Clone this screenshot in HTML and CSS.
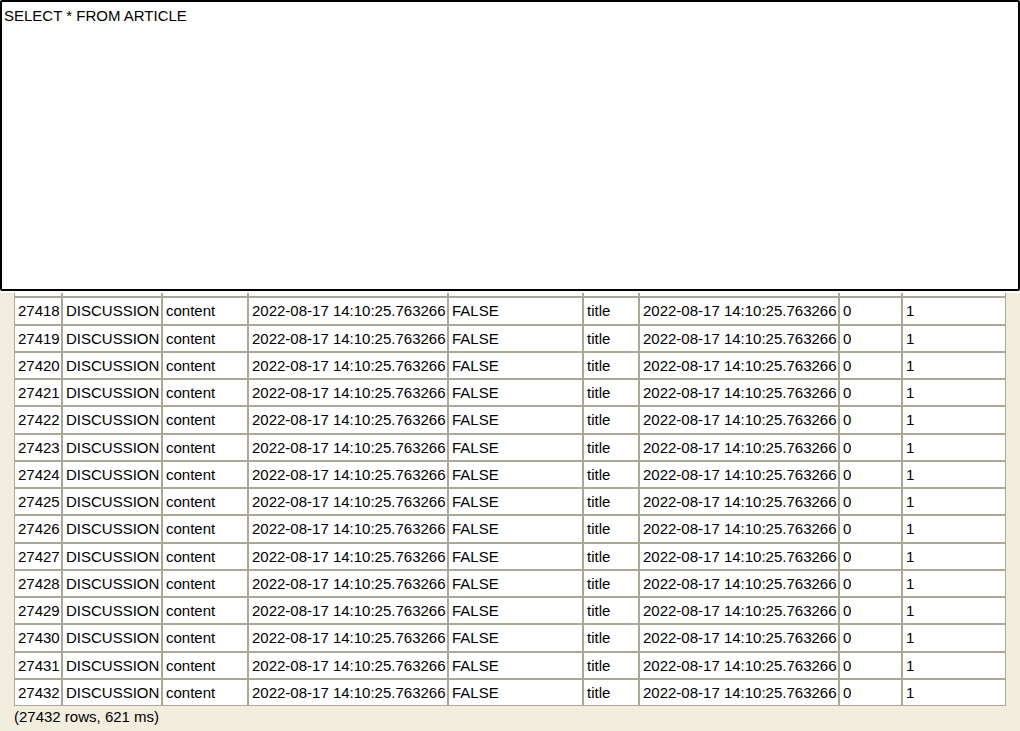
FILE: index.html
```html
<!DOCTYPE html>
<html>
<head>
<meta charset="utf-8">
<title>Query</title>
<link rel="stylesheet" href="styles.css">
</head>
<body>
<div class="app">
  <textarea class="query" spellcheck="false">SELECT * FROM ARTICLE</textarea>
  <div class="results">
    <div class="grid-wrap">
      <table class="grid">
        <colgroup>
          <col class="c-id"><col class="c-type"><col class="c-content"><col class="c-date"><col class="c-bool"><col class="c-title"><col class="c-date"><col class="c-zero"><col class="c-one">
        </colgroup>
        <tbody>
          <tr class="peek"><td></td><td></td><td></td><td></td><td></td><td></td><td></td><td></td><td></td></tr>
          <tr><td>27418</td><td>DISCUSSION</td><td>content</td><td>2022-08-17 14:10:25.763266</td><td>FALSE</td><td>title</td><td>2022-08-17 14:10:25.763266</td><td>0</td><td>1</td></tr>
          <tr><td>27419</td><td>DISCUSSION</td><td>content</td><td>2022-08-17 14:10:25.763266</td><td>FALSE</td><td>title</td><td>2022-08-17 14:10:25.763266</td><td>0</td><td>1</td></tr>
          <tr><td>27420</td><td>DISCUSSION</td><td>content</td><td>2022-08-17 14:10:25.763266</td><td>FALSE</td><td>title</td><td>2022-08-17 14:10:25.763266</td><td>0</td><td>1</td></tr>
          <tr><td>27421</td><td>DISCUSSION</td><td>content</td><td>2022-08-17 14:10:25.763266</td><td>FALSE</td><td>title</td><td>2022-08-17 14:10:25.763266</td><td>0</td><td>1</td></tr>
          <tr><td>27422</td><td>DISCUSSION</td><td>content</td><td>2022-08-17 14:10:25.763266</td><td>FALSE</td><td>title</td><td>2022-08-17 14:10:25.763266</td><td>0</td><td>1</td></tr>
          <tr><td>27423</td><td>DISCUSSION</td><td>content</td><td>2022-08-17 14:10:25.763266</td><td>FALSE</td><td>title</td><td>2022-08-17 14:10:25.763266</td><td>0</td><td>1</td></tr>
          <tr><td>27424</td><td>DISCUSSION</td><td>content</td><td>2022-08-17 14:10:25.763266</td><td>FALSE</td><td>title</td><td>2022-08-17 14:10:25.763266</td><td>0</td><td>1</td></tr>
          <tr><td>27425</td><td>DISCUSSION</td><td>content</td><td>2022-08-17 14:10:25.763266</td><td>FALSE</td><td>title</td><td>2022-08-17 14:10:25.763266</td><td>0</td><td>1</td></tr>
          <tr><td>27426</td><td>DISCUSSION</td><td>content</td><td>2022-08-17 14:10:25.763266</td><td>FALSE</td><td>title</td><td>2022-08-17 14:10:25.763266</td><td>0</td><td>1</td></tr>
          <tr><td>27427</td><td>DISCUSSION</td><td>content</td><td>2022-08-17 14:10:25.763266</td><td>FALSE</td><td>title</td><td>2022-08-17 14:10:25.763266</td><td>0</td><td>1</td></tr>
          <tr><td>27428</td><td>DISCUSSION</td><td>content</td><td>2022-08-17 14:10:25.763266</td><td>FALSE</td><td>title</td><td>2022-08-17 14:10:25.763266</td><td>0</td><td>1</td></tr>
          <tr><td>27429</td><td>DISCUSSION</td><td>content</td><td>2022-08-17 14:10:25.763266</td><td>FALSE</td><td>title</td><td>2022-08-17 14:10:25.763266</td><td>0</td><td>1</td></tr>
          <tr><td>27430</td><td>DISCUSSION</td><td>content</td><td>2022-08-17 14:10:25.763266</td><td>FALSE</td><td>title</td><td>2022-08-17 14:10:25.763266</td><td>0</td><td>1</td></tr>
          <tr><td>27431</td><td>DISCUSSION</td><td>content</td><td>2022-08-17 14:10:25.763266</td><td>FALSE</td><td>title</td><td>2022-08-17 14:10:25.763266</td><td>0</td><td>1</td></tr>
          <tr><td>27432</td><td>DISCUSSION</td><td>content</td><td>2022-08-17 14:10:25.763266</td><td>FALSE</td><td>title</td><td>2022-08-17 14:10:25.763266</td><td>0</td><td>1</td></tr>
        </tbody>
      </table>
    </div>
    <div class="status">(27432 rows, 621 ms)</div>
  </div>
</div>
</body>
</html>
```

FILE: styles.css
```css
html, body {
  margin: 0;
  padding: 0;
  background: #ffffff;
}

body {
  font-family: "Liberation Sans", Arial, sans-serif;
  font-size: 15px;
  color: #000000;
}

.app {
  display: flex;
  flex-direction: column;
  width: 1020px;
  height: 731px;
  overflow: hidden;
}

.query {
  display: block;
  box-sizing: border-box;
  width: 1020px;
  height: 291px;
  margin: 0;
  padding: 5px 2px;
  border: 2px solid #000000;
  border-radius: 2px;
  font-family: "Liberation Sans", Arial, sans-serif;
  font-size: 15px;
  line-height: 17px;
  color: #000000;
  background: #ffffff;
  resize: none;
  overflow: hidden;
  outline: none;
  flex: none;
}

.results {
  flex: 1;
  margin-top: 2px;
  background: #f1eee0;
  padding: 0 14px;
  display: flex;
  flex-direction: column;
  min-height: 0;
}

.grid-wrap {
  height: 413px;
  flex: none;
  overflow: hidden;
  display: flex;
  flex-direction: column;
  justify-content: flex-end;
}

.grid {
  flex: none;
  width: 992px;
  table-layout: fixed;
  border-collapse: separate;
  border-spacing: 0;
  background: #ffffff;
}

.c-id { width: 48px; }
.c-type { width: 100px; }
.c-content { width: 86px; }
.c-date { width: 200px; }
.c-bool { width: 135px; }
.c-title { width: 56px; }
.c-zero { width: 63px; }
.c-one { width: 104px; }

.grid td {
  box-sizing: border-box;
  height: 27.25px;
  padding: 0 3px;
  border: 1px solid #aca899;
  white-space: nowrap;
  overflow: hidden;
  vertical-align: middle;
  line-height: 17px;
}

.status {
  padding: 2px 0 0 0;
  line-height: 17px;
  flex: none;
}
```
